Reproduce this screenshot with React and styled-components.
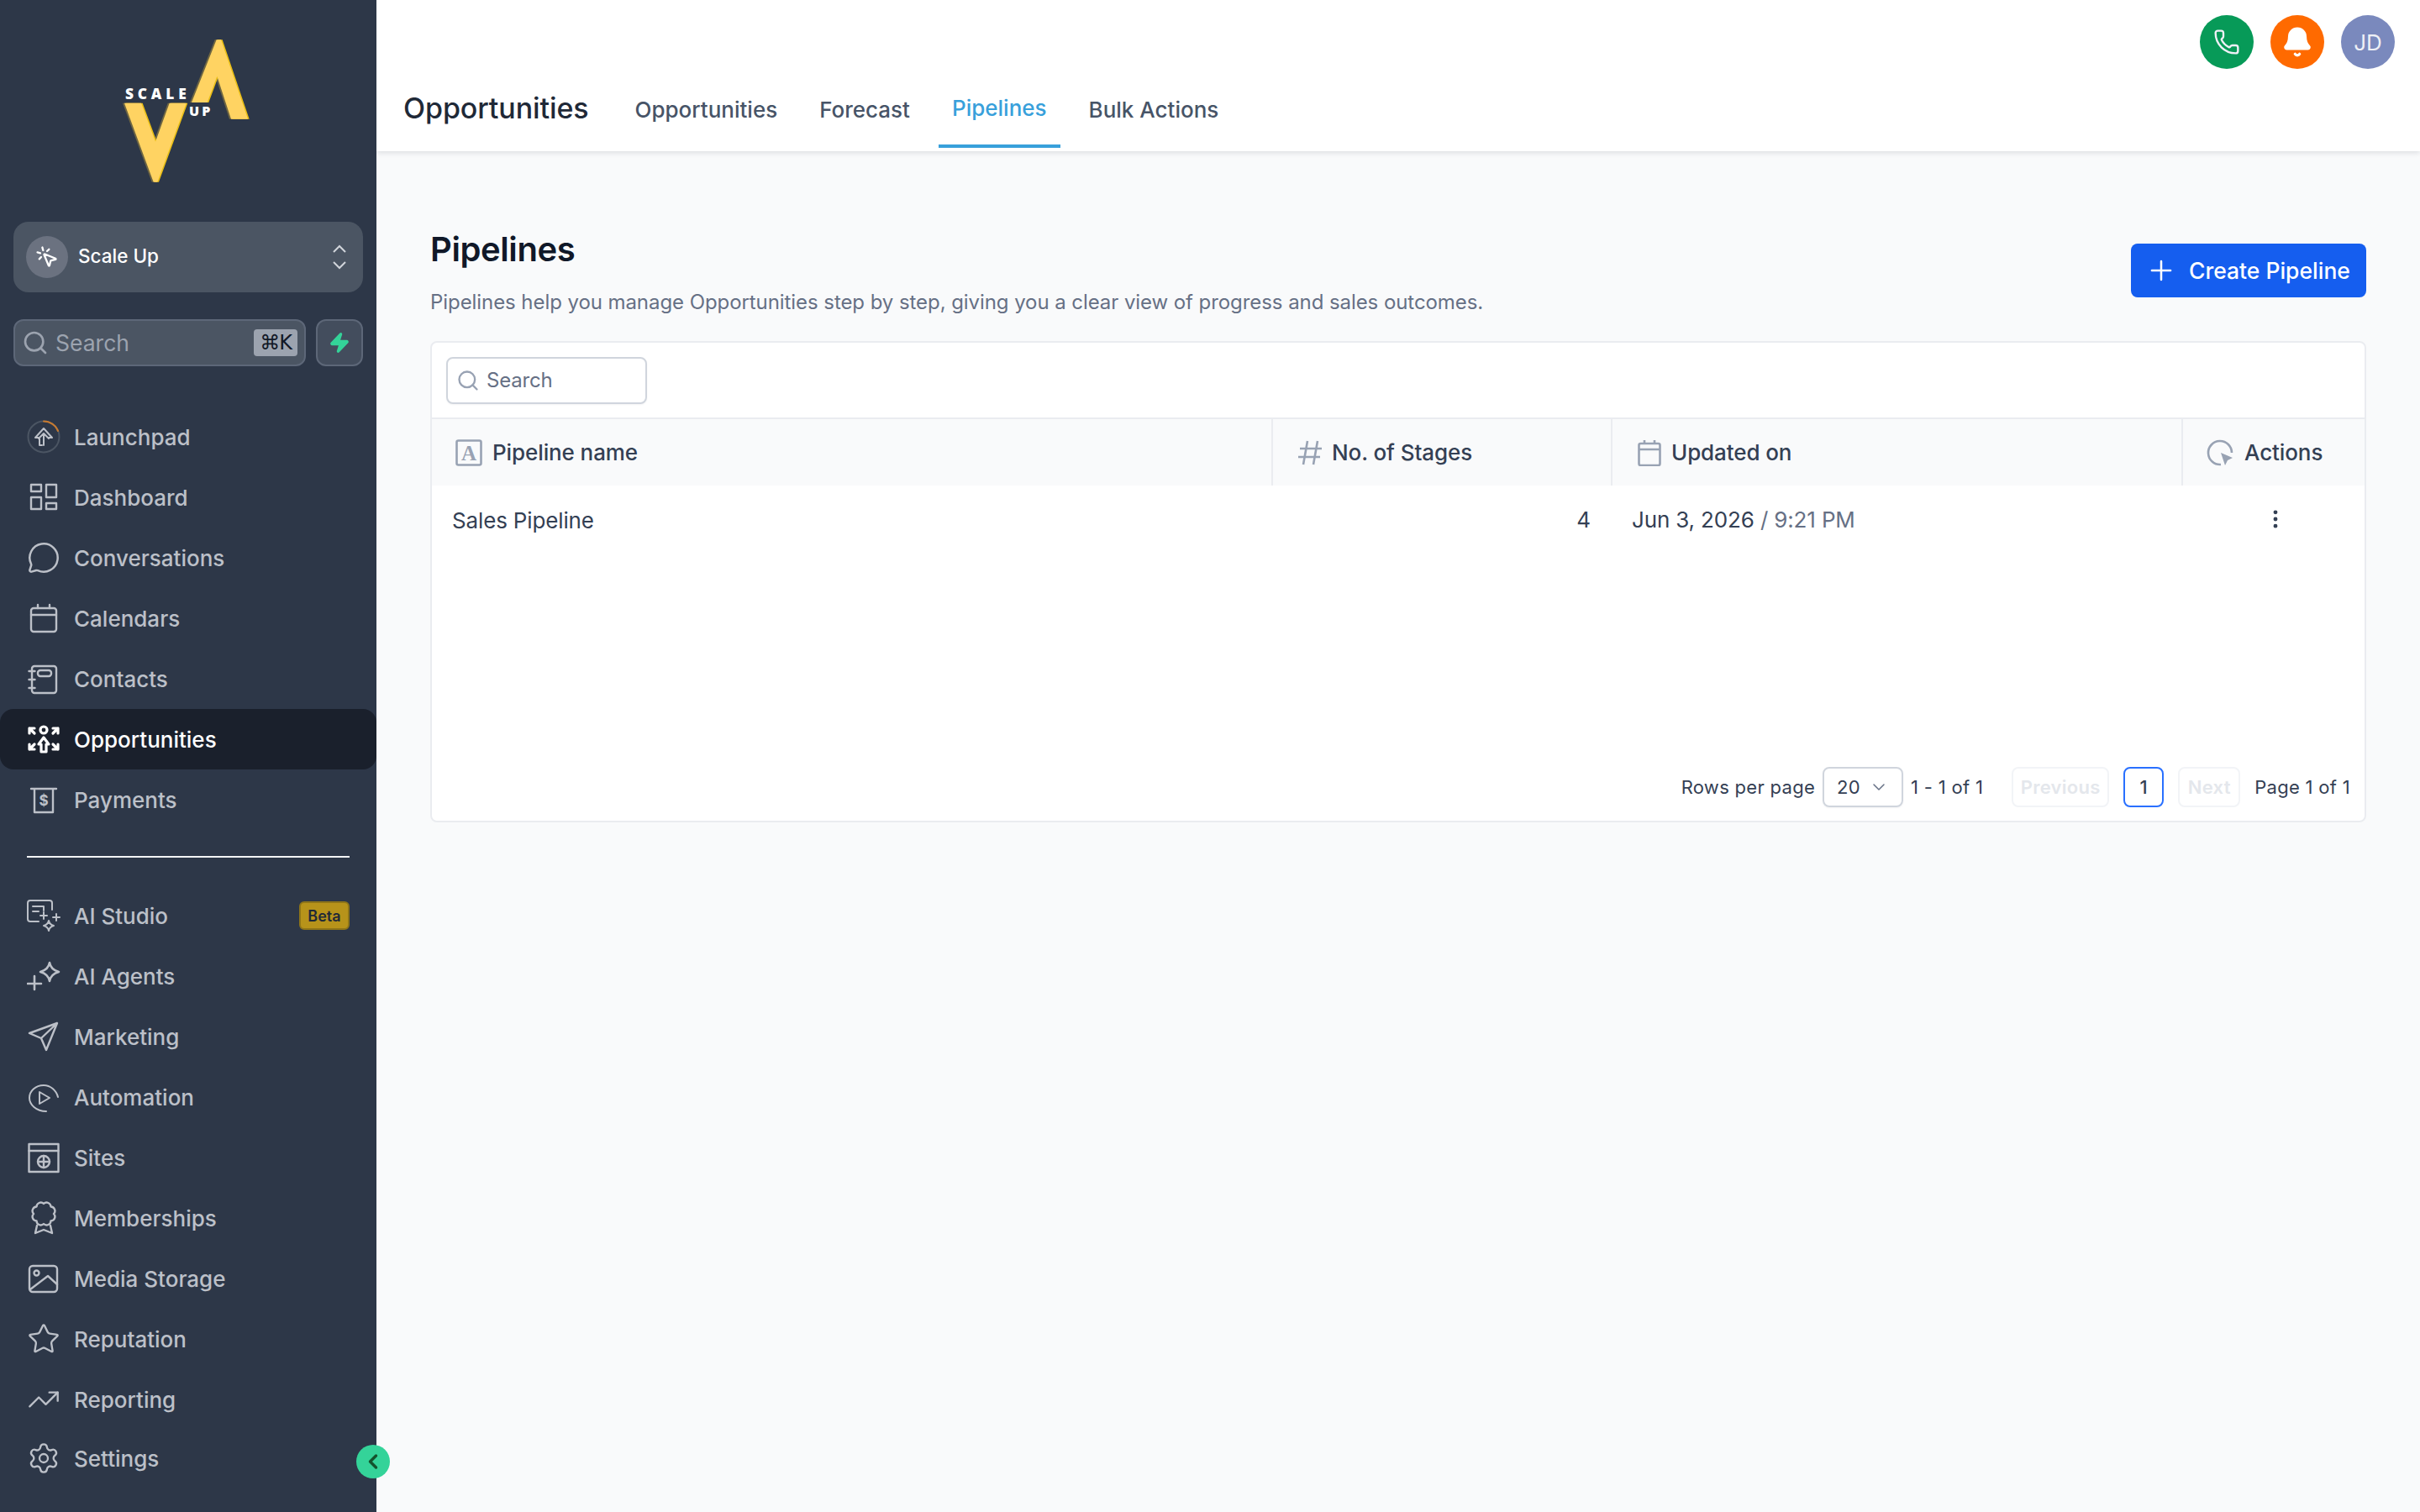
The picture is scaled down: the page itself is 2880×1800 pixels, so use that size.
import styled, { createGlobalStyle } from 'styled-components'
import {
  Bell,
  ChevronLeft,
  ChevronDown,
  MessageCircle,
  MoreVertical,
  MousePointerClick,
  Phone,
  Plus,
  Search,
  Settings,
  Star,
  TrendingUp,
  Zap,
} from 'lucide-react'

const GlobalStyle = createGlobalStyle`
  * {
    box-sizing: border-box;
  }
  html,
  body {
    margin: 0;
    padding: 0;
    background: #f9fafb;
    font-family: Inter, 'Noto Sans', sans-serif;
  }
`

const Shell = styled.div`
  display: grid;
  grid-template-columns: 448px 1fr;
  width: 2880px;
  height: 1800px;
  overflow: hidden;
`

const Sidebar = styled.aside`
  position: relative;
  background: #2d3748;
  padding-top: 20px;
  display: flex;
  flex-direction: column;
`

const LogoBox = styled.svg`
  display: block;
  width: 260px;
  height: 210px;
  margin: 0 0 34px 100px;
  flex: none;
`

const Switcher = styled.div`
  margin: 0 16px;
  height: 84px;
  background: #4b5563;
  border-radius: 18px;
  display: flex;
  align-items: center;
  padding: 0 20px 0 15px;
  color: #fff;
  font-size: 22.500px;
  font-weight: 500;
`

const SwitcherAvatar = styled.span`
  width: 50px;
  height: 50px;
  border-radius: 50%;
  background: #6b7280;
  display: flex;
  align-items: center;
  justify-content: center;
  margin-right: 12px;
`

const SwitcherName = styled.span`
  flex: 1;
  padding-bottom: 4px;
`

const SearchRow = styled.div`
  display: flex;
  gap: 12px;
  margin: 32px 16px 0;
`

const SideSearch = styled.div`
  flex: 1;
  height: 56px;
  background: #4b5563;
  border: 2px solid #5d6778;
  border-radius: 12px;
  display: flex;
  align-items: center;
  padding: 0 8px;
  gap: 8px;
  color: #9ca3af;
  font-size: 26.500px;
`

const SideSearchText = styled.span`
  flex: 1;
`

const Kbd = styled.span`
  width: 52px;
  height: 32px;
  background: #9ca3af;
  border-radius: 4px;
  color: #111827;
  font-size: 24px;
  display: flex;
  align-items: center;
  justify-content: center;
  font-family: 'DejaVu Sans', Inter, sans-serif;
  letter-spacing: -1px;
`

const BoltButton = styled.div`
  width: 56px;
  height: 56px;
  background: #434d5d;
  border: 2px solid #5d6778;
  border-radius: 12px;
  display: flex;
  align-items: center;
  justify-content: center;
  color: #34d399;
`

const Nav = styled.nav`
  margin-top: ${(p) => p.$top}px;
  display: flex;
  flex-direction: column;
`

const NavItem = styled.a`
  height: ${(p) => (p.$short ? 68 : 72)}px;
  display: flex;
  align-items: center;
  gap: 16px;
  padding: 0 32px;
  font-size: 26px;
  font-weight: 500;
  color: ${(p) => (p.$active ? '#ffffff' : '#bcc0c8')};
  background: ${(p) => (p.$active ? '#1a202c' : 'transparent')};
  border-radius: ${(p) => (p.$active ? '16px' : '0')};
`

const NavLabel = styled.span`
  flex: 1;
`

const BetaTag = styled.span`
  width: 60px;
  height: 34px;
  background: #b7931a;
  border: 2px solid #8f7518;
  border-radius: 6px;
  color: #1f2937;
  font-size: 18px;
  font-weight: 600;
  display: flex;
  align-items: center;
  justify-content: center;
`

const Divider = styled.div`
  height: 2px;
  margin: 31px 32px 0;
  background: #f3f4f6;
`

const Collapse = styled.button`
  position: absolute;
  right: -16px;
  bottom: 40px;
  width: 40px;
  height: 40px;
  border: 0;
  padding: 0;
  border-radius: 50%;
  background: #34d399;
  color: #14532d;
  display: flex;
  align-items: center;
  justify-content: center;
  z-index: 2;
`

const Main = styled.main`
  display: flex;
  flex-direction: column;
  min-width: 0;
`

const Header = styled.header`
  height: 180px;
  background: #fff;
  box-shadow: 0 2px 6px rgba(16, 24, 40, 0.12);
  display: flex;
  justify-content: space-between;
  padding: 0 30px 4px 32px;
  flex: none;
`

const HeaderLeft = styled.div`
  align-self: flex-end;
  display: flex;
  align-items: center;
  height: 96px;
`

const HeaderTitle = styled.h2`
  margin: 0 39px 0 0;
  font-size: 34px;
  font-weight: 500;
  letter-spacing: -0.1px;
  color: #1f2937;
`

const Tabs = styled.div`
  display: flex;
  gap: 18px;
  height: 100%;
`

const Tab = styled.a`
  display: flex;
  align-items: center;
  padding: ${(p) => (p.$active ? 4 : 8)}px 16px 0;
  font-size: 26px;
  font-weight: 500;
  color: ${(p) => (p.$active ? '#38a0db' : '#475467')};
  border-bottom: 4px solid ${(p) => (p.$active ? '#38a0db' : 'transparent')};
`

const HeaderActions = styled.div`
  display: flex;
  gap: 20px;
  padding-top: 18px;
`

const RoundAction = styled.span`
  width: 64px;
  height: 64px;
  border-radius: 50%;
  background: ${(p) => p.$bg};
  color: #eef0f6;
  display: flex;
  align-items: center;
  justify-content: center;
  font-size: 26px;
`

const Content = styled.section`
  padding: 89px 64px 0;
`

const PageHead = styled.div`
  display: flex;
  justify-content: space-between;
  align-items: center;
  margin-bottom: 28px;
`

const PageTitle = styled.h1`
  margin: 0;
  font-size: 40px;
  line-height: 56px;
  font-weight: 600;
  letter-spacing: -0.4px;
  color: #101828;
`

const PageText = styled.p`
  margin: 17px 0 0;
  font-size: 24px;
  line-height: 36px;
  letter-spacing: -0.07px;
  color: #667085;
`

const PrimaryButton = styled.button`
  width: 280px;
  height: 64px;
  margin-bottom: 3px;
  border: 0;
  border-radius: 8px;
  background: #155eef;
  color: #fff;
  font: 500 26.500px Inter, sans-serif;
  display: flex;
  align-items: center;
  gap: 14px;
  padding: 0 0 0 17px;
`

const Card = styled.div`
  height: 573px;
  background: #fff;
  border: 2px solid #eaecf0;
  border-radius: 8px;
  display: flex;
  flex-direction: column;
`

const Toolbar = styled.div`
  height: 89px;
  display: flex;
  align-items: center;
  padding-left: 17px;
`

const TableSearch = styled.div`
  width: 239px;
  height: 56px;
  border: 2px solid #d0d5dd;
  border-radius: 8px;
  background: #fff;
  box-shadow: 0 1px 2px rgba(16, 24, 40, 0.05);
  display: flex;
  align-items: center;
  gap: 8px;
  padding-left: 10px;
  color: #667085;
  font-size: 24px;
  letter-spacing: -0.2px;
`

const TableRow = styled.div`
  display: grid;
  grid-template-columns: 1001px 404px 679px 1fr;
`

const HeadRow = styled(TableRow)`
  height: 81px;
  background: #f9fafb;
  border-top: 2px solid #eaecf0;
`

const HeadCell = styled.div`
  display: flex;
  align-items: center;
  gap: 12px;
  padding-left: ${(p) => p.$pad}px;
  font-size: 26px;
  font-weight: 500;
  letter-spacing: -0.1px;
  color: #344054;
  border-right: ${(p) => (p.$last ? 0 : '2px solid #eaecf0')};
`

const BodyRow = styled(TableRow)`
  height: 80px;
  font-size: 26px;
  letter-spacing: -0.15px;
  color: #344054;
  align-items: center;
`

const NameCell = styled.div`
  padding-left: 24px;
  padding-top: 2px;
`

const CountCell = styled.div`
  padding-right: 26px;
  text-align: right;
`

const DateCell = styled.div`
  padding-left: 23px;
`

const Muted = styled.span`
  color: #667085;
`

const ActionCell = styled.div`
  display: flex;
  justify-content: center;
  padding-left: 4px;
  color: #344054;
`

const Footer = styled.div`
  margin-top: auto;
  display: flex;
  align-items: center;
  justify-content: flex-end;
  padding: 0 17px 16px 0;
  font-size: 22px;
  letter-spacing: 0.3px;
  color: #344054;
`

const PageSelect = styled.div`
  width: 96px;
  height: 48px;
  margin: 0 9px;
  border: 2px solid #d0d5dd;
  border-radius: 8px;
  display: flex;
  align-items: center;
  gap: 10px;
  padding-left: 15px;
  box-shadow: 0 1px 2px rgba(16, 24, 40, 0.05);
`

const PageButton = styled.div`
  width: ${(p) => p.$w}px;
  height: 48px;
  margin-left: ${(p) => p.$gap}px;
  border: 2px solid ${(p) => (p.$current ? '#2970ff' : '#f2f4f7')};
  border-radius: 8px;
  display: flex;
  align-items: center;
  justify-content: center;
  color: ${(p) => (p.$current ? '#344054' : '#e4e7ec')};
  font-weight: ${(p) => (p.$current ? 500 : 600)};
`

const PageCount = styled.span`
  margin-left: 17px;
`

const Ico = styled.svg`
  width: 40px;
  height: 40px;
  flex: none;
  fill: none;
  stroke: currentColor;
  stroke-width: ${(p) => p.$w || 2.4};
  stroke-linecap: round;
  stroke-linejoin: round;
`

const HeadIco = styled.svg`
  width: ${(p) => p.$size}px;
  height: 32px;
  flex: none;
  fill: none;
  stroke: #98a2b3;
  stroke-width: 2.6;
`

const Logo = () => (
  <LogoBox viewBox="0 0 780 630">
    <g fill="#6f6642" transform="translate(-6 0)">
      <path d="M144 308h60l51 138 50-138h60L262 590h-14z" />
      <path d="M384 306 473 82h16l96 283h-60L475 212l-35 94z" />
    </g>
    <g fill="#e9be16" transform="translate(5 0)">
      <path d="M144 308h60l51 138 50-138h60L262 590h-14z" />
      <path d="M384 306 473 82h16l96 283h-60L475 212l-35 94z" />
    </g>
    <g fill="#ffd362">
      <path d="M144 308h60l51 138 50-138h60L262 590h-14z" />
      <path d="M384 306 473 82h16l96 283h-60L475 212l-35 94z" />
    </g>
    <text x="147" y="295" fill="#fff" fontFamily="'Open Sans', sans-serif" fontWeight="800" fontSize="52" textLength="218">
      SCALE
    </text>
    <text x="375" y="354" fill="#fff" fontFamily="'Open Sans', sans-serif" fontWeight="800" fontSize="48" textLength="76">
      UP
    </text>
  </LogoBox>
)

// scalloped rosette for the memberships badge
const rosette = (cx, cy, r, lobes) => {
  let d = ''
  for (let i = 0; i <= lobes; i++) {
    const a = (i / lobes) * Math.PI * 2 - Math.PI / 2
    const x = (cx + r * Math.cos(a)).toFixed(2)
    const y = (cy + r * Math.sin(a)).toFixed(2)
    d += i === 0 ? `M${x} ${y}` : `A${(r * 0.42).toFixed(2)} ${(r * 0.42).toFixed(2)} 0 0 1 ${x} ${y}`
  }
  return d + 'Z'
}

const LaunchpadIcon = () => (
  <Ico viewBox="0 0 40 40" $w={2}>
    <circle cx="20" cy="20" r="18.500" stroke="#4b5563" />
    <path d="M20 1.500A18.500 18.500 0 0 1 37 13" stroke="#c67a30" />
    <path d="M14 21h-4l10-11 10 11h-4" />
    <path d="M20 16v14M20 16l-6 6M20 16l6 6M15 22v8h3" />
  </Ico>
)

const DashboardIcon = () => (
  <Ico viewBox="0 0 40 40">
    <rect x="5" y="5" width="12" height="8" />
    <rect x="23" y="5" width="12" height="15" />
    <rect x="5" y="20" width="12" height="14" />
    <rect x="23" y="27" width="12" height="7" />
  </Ico>
)

const CalendarIcon = () => (
  <Ico viewBox="0 0 40 40">
    <rect x="5" y="8" width="30" height="28" rx="3" />
    <path d="M5 16h30M13 4v4M27 4v4" />
  </Ico>
)

const ContactsIcon = () => (
  <Ico viewBox="0 0 40 40">
    <rect x="6" y="5" width="29" height="32" rx="3" />
    <rect x="13" y="10" width="16" height="7" rx="3" />
    <path d="M2.500 11h7M2.500 21h7M2.500 31h7" />
  </Ico>
)

const OpportunitiesIcon = () => (
  <Ico viewBox="0 0 40 40" $w={3.200}>
    <circle cx="20" cy="9" r="4" />
    <path d="M14 26l6-8 6 8h-3v9h-6v-9z" />
    <path d="M3 7h6M3 7v6M3 7l6 6M37 7h-6M37 7v6M37 7l-6 6M3 32h6M3 32v-6M3 32l6-6M37 32h-6M37 32v-6M37 32l-6-6" />
  </Ico>
)

const PaymentsIcon = () => (
  <Ico viewBox="0 0 40 40">
    <path d="M5 7h30M9 7v28h22V7" />
    <text x="20" y="27" textAnchor="middle" fontSize="17" fontWeight="700" fill="currentColor" stroke="none">
      $
    </text>
  </Ico>
)

const StudioIcon = () => (
  <Ico viewBox="0 0 40 40" $w={2}>
    <path d="M14 27H4a3 3 0 0 1-3-3V5a3 3 0 0 1 3-3h23a3 3 0 0 1 3 3v8" />
    <path d="M7 9h13v5M7 15h7" />
    <path d="M20 16v8M16 20h8M35 18v8M31 22h8" />
    <path d="M26 26c.6 3.400 2.100 5 6 6-3.900 1-5.400 2.600-6 6-.6-3.400-2.100-5-6-6 3.900-1 5.400-2.600 6-6z" />
  </Ico>
)

const AgentsIcon = () => (
  <Ico viewBox="0 0 40 40" $w={2.600}>
    <path d="M9 20v16M1 29h16" />
    <path d="M27 4c1 6 4 9 11 11-7 2-10 5-11 11-1-6-4-9-11-11 7-2 10-5 11-11z" />
  </Ico>
)

const MarketingIcon = () => (
  <Ico viewBox="0 0 40 40">
    <path d="M36 4 3 16l14 6 6 14zM17 22 36 4" />
  </Ico>
)

const AutomationIcon = () => (
  <Ico viewBox="0 0 40 40" $w={2}>
    <path d="M37 20C35 12 28 6 20 6 10 6 3 13 3 21s8 16 20 16" />
    <path d="M15 14l12 7-12 7z" />
  </Ico>
)

const SitesIcon = () => (
  <Ico viewBox="0 0 40 40">
    <rect x="2.500" y="4" width="35" height="33" />
    <path d="M2.500 12h35" />
    <circle cx="20" cy="25" r="7" />
    <path d="M13 25h14M20 18v14" />
  </Ico>
)

const MembershipIcon = () => (
  <Ico viewBox="0 0 40 40">
    <path d={rosette(20, 15, 12, 8)} />
    <path d="M12 29l-2 9 10-4 10 4-2-9" />
  </Ico>
)

const MediaIcon = () => (
  <Ico viewBox="0 0 40 40">
    <rect x="3" y="5" width="33" height="31" rx="4" />
    <circle cx="11.500" cy="13.500" r="3" />
    <path d="M4 33l21-16 11 10" />
  </Ico>
)

const topLinks = [
  ['Launchpad', <LaunchpadIcon key="i" />],
  ['Dashboard', <DashboardIcon key="i" />],
  ['Conversations', <MessageCircle key="i" size={40} strokeWidth={1.5} />],
  ['Calendars', <CalendarIcon key="i" />],
  ['Contacts', <ContactsIcon key="i" />],
  ['Opportunities', <OpportunitiesIcon key="i" />, true],
  ['Payments', <PaymentsIcon key="i" />],
]

const bottomLinks = [
  ['AI Studio', <StudioIcon key="i" />],
  ['AI Agents', <AgentsIcon key="i" />],
  ['Marketing', <MarketingIcon key="i" />],
  ['Automation', <AutomationIcon key="i" />],
  ['Sites', <SitesIcon key="i" />],
  ['Memberships', <MembershipIcon key="i" />],
  ['Media Storage', <MediaIcon key="i" />],
  ['Reputation', <Star key="i" size={40} strokeWidth={1.4} />],
  ['Reporting', <TrendingUp key="i" size={40} strokeWidth={1.4} />],
]

export default function App() {
  return (
    <Shell>
      <GlobalStyle />
      <Sidebar>
        <Logo />
        <Switcher>
          <SwitcherAvatar>
            <MousePointerClick size={28} strokeWidth={2} />
          </SwitcherAvatar>
          <SwitcherName>Scale Up</SwitcherName>
          <svg width="16" height="30" viewBox="0 0 16 30" fill="none" stroke="#d1d5db" strokeWidth="2">
            <path d="M1 9l7-7 7 7M1 21l7 7 7-7" />
          </svg>
        </Switcher>
        <SearchRow>
          <SideSearch>
            <Search size={32} strokeWidth={2} />
            <SideSearchText>Search</SideSearchText>
            <Kbd>⌘K</Kbd>
          </SideSearch>
          <BoltButton>
            <Zap size={26} fill="currentColor" />
          </BoltButton>
        </SearchRow>
        <Nav $top={48}>
          {topLinks.map(([label, icon, active]) => (
            <NavItem key={label} $active={active}>
              {icon}
              <NavLabel>{label}</NavLabel>
            </NavItem>
          ))}
        </Nav>
        <Divider />
        <Nav $top={33}>
          {bottomLinks.map(([label, icon]) => (
            <NavItem key={label}>
              {icon}
              <NavLabel>{label}</NavLabel>
              {label === 'AI Studio' && <BetaTag>Beta</BetaTag>}
            </NavItem>
          ))}
          <NavItem $short>
            <Settings size={40} strokeWidth={1.4} />
            <NavLabel>Settings</NavLabel>
          </NavItem>
        </Nav>
        <Collapse>
          <ChevronLeft size={28} strokeWidth={3} />
        </Collapse>
      </Sidebar>

      <Main>
        <Header>
          <HeaderLeft>
            <HeaderTitle>Opportunities</HeaderTitle>
            <Tabs>
              <Tab>Opportunities</Tab>
              <Tab>Forecast</Tab>
              <Tab $active>Pipelines</Tab>
              <Tab>Bulk Actions</Tab>
            </Tabs>
          </HeaderLeft>
          <HeaderActions>
            <RoundAction $bg="#079a58">
              <Phone size={32} strokeWidth={1.8} />
            </RoundAction>
            <RoundAction $bg="#ff6a00">
              <Bell size={38} color="#fff" fill="#fff" />
            </RoundAction>
            <RoundAction $bg="#7a89bd">JD</RoundAction>
          </HeaderActions>
        </Header>

        <Content>
          <PageHead>
            <div>
              <PageTitle>Pipelines</PageTitle>
              <PageText>
                Pipelines help you manage Opportunities step by step, giving you a clear view of progress and sales
                outcomes.
              </PageText>
            </div>
            <PrimaryButton>
              <Plus size={38} strokeWidth={1.6} />
              Create Pipeline
            </PrimaryButton>
          </PageHead>

          <Card>
            <Toolbar>
              <TableSearch>
                <Search size={28} strokeWidth={2} color="#98a2b3" />
                Search
              </TableSearch>
            </Toolbar>
            <HeadRow>
              <HeadCell $pad={28}>
                <HeadIco $size={32} viewBox="0 0 32 32">
                  <rect x="1.500" y="1.500" width="29" height="29" rx="2" />
                  <text x="16" y="25" textAnchor="middle" fontSize="25" fontWeight="700" fontFamily="'Liberation Serif', serif" fill="#98a2b3" stroke="none">
                    A
                  </text>
                </HeadIco>
                Pipeline name
              </HeadCell>
              <HeadCell $pad={30}>
                <HeadIco $size={28} viewBox="0 0 28 32">
                  <path d="M11 2 6 30M23 2l-5 28M2 11h26M0 21h26" />
                </HeadIco>
                No. of Stages
              </HeadCell>
              <HeadCell $pad={30}>
                <HeadIco $size={28} viewBox="0 0 28 32">
                  <rect x="1.500" y="5" width="25" height="26" rx="2" />
                  <path d="M1.500 12h25M8 1v4M20 1v4" />
                </HeadIco>
                Updated on
              </HeadCell>
              <HeadCell $pad={28} $last>
                <HeadIco $size={33} viewBox="0 0 33 32">
                  <path d="M30 16A14 14 0 1 0 17 30" />
                  <path d="M17 16l14 6-6 3-3 6z" fill="#98a2b3" stroke="none" />
                </HeadIco>
                Actions
              </HeadCell>
            </HeadRow>
            <BodyRow>
              <NameCell>Sales Pipeline</NameCell>
              <CountCell>4</CountCell>
              <DateCell>
                Jun 3, 2026 <Muted>/ 9:21 PM</Muted>
              </DateCell>
              <ActionCell>
                <MoreVertical size={28} strokeWidth={2.2} />
              </ActionCell>
            </BodyRow>
            <Footer>
              Rows per page
              <PageSelect>
                20
                <ChevronDown size={24} strokeWidth={1.5} color="#667085" />
              </PageSelect>
              1 - 1 of 1
              <PageButton $w={116} $gap={34}>
                Previous
              </PageButton>
              <PageButton $w={48} $gap={17} $current>
                1
              </PageButton>
              <PageButton $w={74} $gap={17}>
                Next
              </PageButton>
              <PageCount>Page 1 of 1</PageCount>
            </Footer>
          </Card>
        </Content>
      </Main>
    </Shell>
  )
}
